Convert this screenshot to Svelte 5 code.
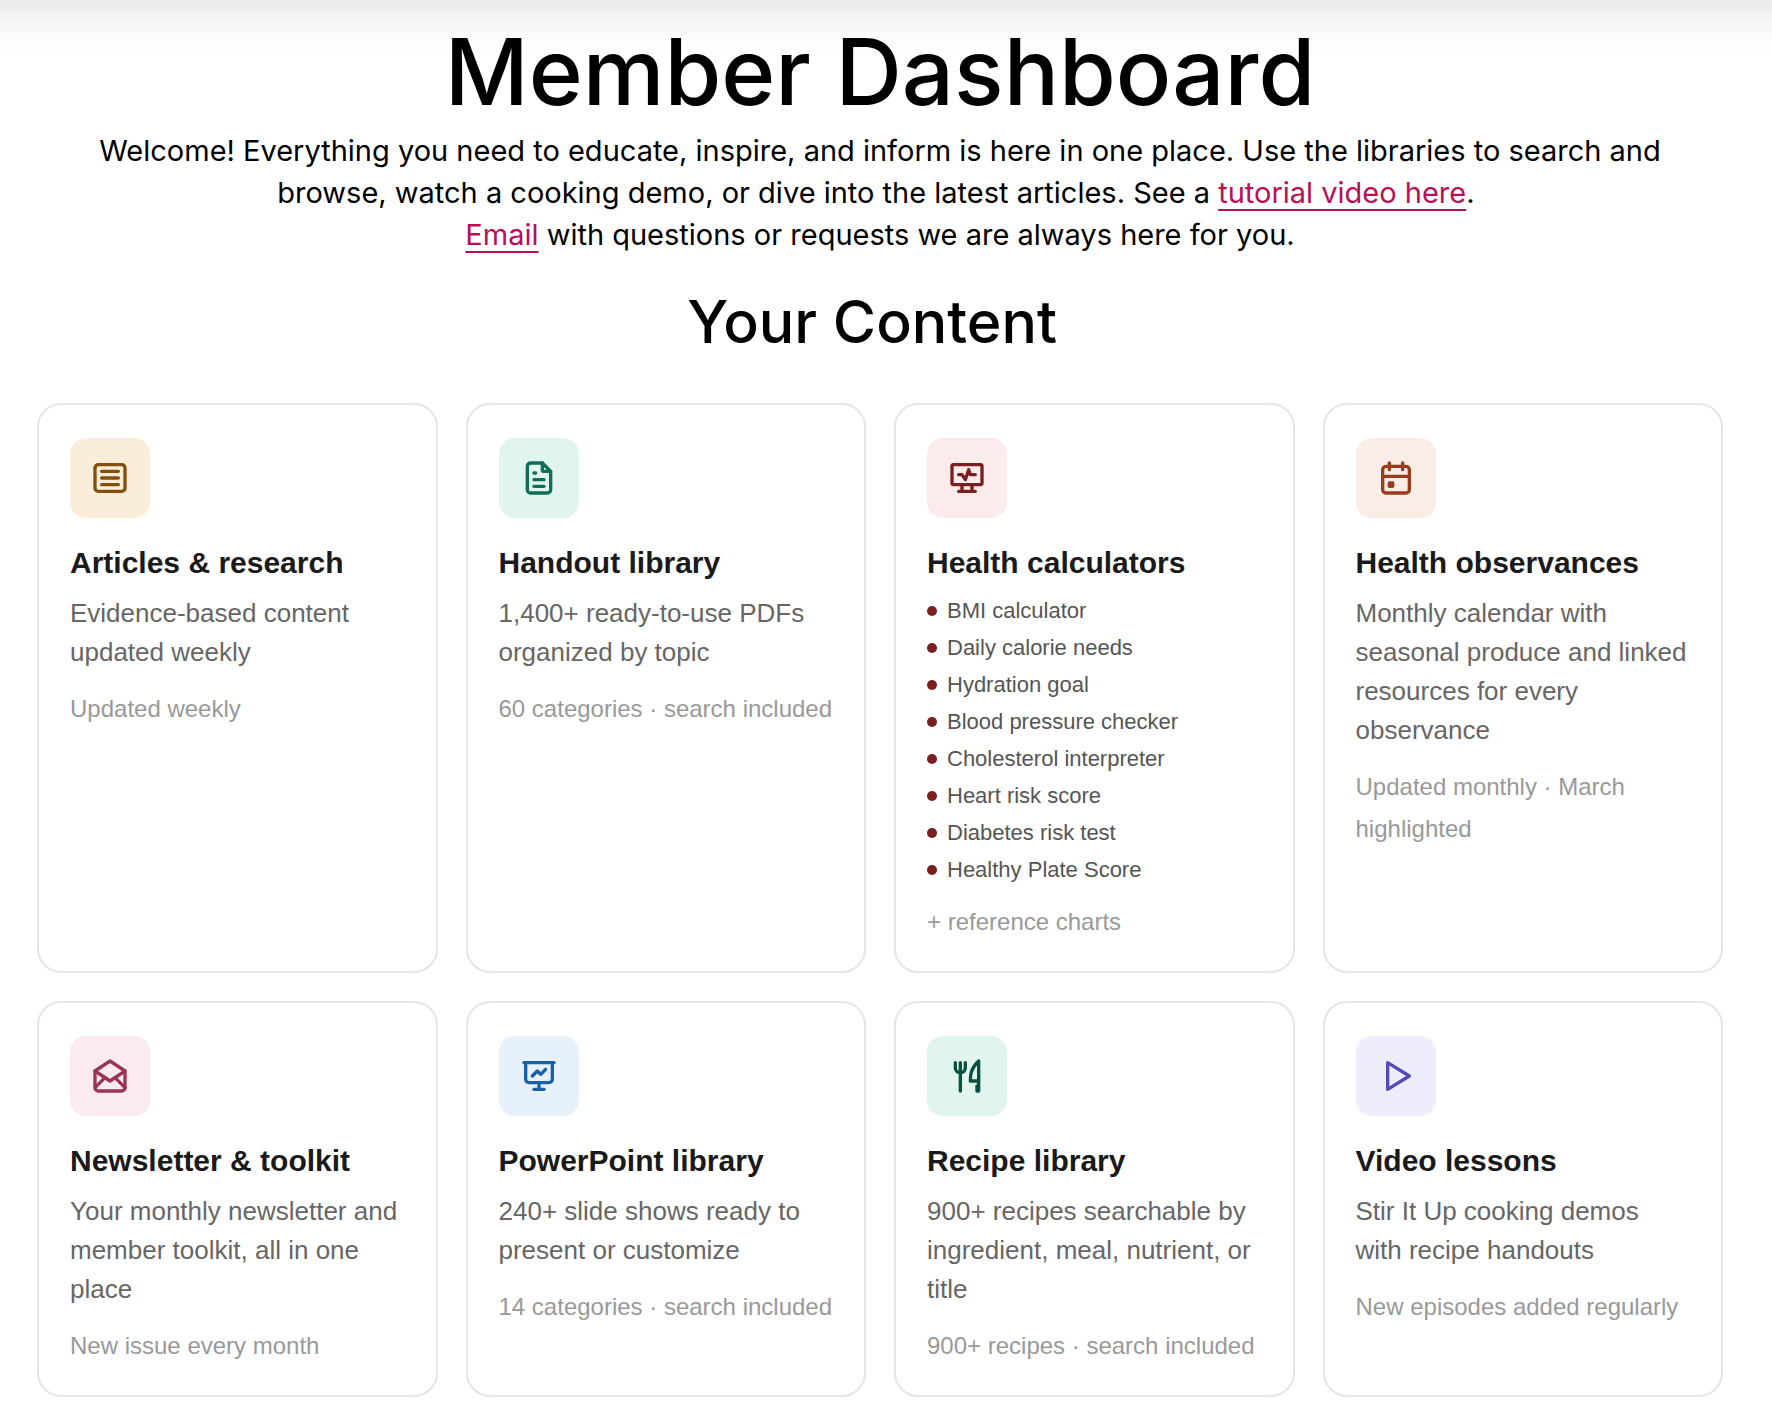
<script>
  const cards = [
    {
      title: "Articles & research",
      tone: "amber",
      desc: "Evidence-based content updated weekly",
      meta: "Updated weekly",
      paths: [
        "M3 6a2 2 0 0 1 2 -2h14a2 2 0 0 1 2 2v12a2 2 0 0 1 -2 2h-14a2 2 0 0 1 -2 -2z",
        "M7 8h10",
        "M7 12h10",
        "M7 16h10",
      ],
    },
    {
      title: "Handout library",
      tone: "teal",
      desc: "1,400+ ready-to-use PDFs organized by topic",
      meta: "60 categories · search included",
      paths: [
        "M14 3v4a1 1 0 0 0 1 1h4",
        "M17 21h-10a2 2 0 0 1 -2 -2v-14a2 2 0 0 1 2 -2h7l5 5v11a2 2 0 0 1 -2 2z",
        "M9 9h1",
        "M9 13h6",
        "M9 17h6",
      ],
    },
    {
      title: "Health calculators",
      tone: "red",
      items: [
        "BMI calculator",
        "Daily calorie needs",
        "Hydration goal",
        "Blood pressure checker",
        "Cholesterol interpreter",
        "Heart risk score",
        "Diabetes risk test",
        "Healthy Plate Score",
      ],
      meta: "+ reference charts",
      paths: [
        "M3 5a1 1 0 0 1 1 -1h16a1 1 0 0 1 1 1v10a1 1 0 0 1 -1 1h-16a1 1 0 0 1 -1 -1z",
        "M7 20h10",
        "M9 16v4",
        "M15 16v4",
        "M7 10h2l2 3l2 -6l1 3h3",
      ],
    },
    {
      title: "Health observances",
      tone: "rust",
      desc: "Monthly calendar with seasonal produce and linked resources for every observance",
      meta: "Updated monthly · March highlighted",
      paths: [
        "M4 7a2 2 0 0 1 2 -2h12a2 2 0 0 1 2 2v12a2 2 0 0 1 -2 2h-12a2 2 0 0 1 -2 -2z",
        "M16 3v4",
        "M8 3v4",
        "M4 11h16",
        "M8 15h2v2h-2z",
      ],
    },
    {
      title: "Newsletter & toolkit",
      tone: "pink",
      desc: "Your monthly newsletter and member toolkit, all in one place",
      meta: "New issue every month",
      paths: [
        "M3 9l9 6l9 -6l-9 -6l-9 6",
        "M21 9v10a2 2 0 0 1 -2 2h-14a2 2 0 0 1 -2 -2v-10",
        "M3 19l6 -6",
        "M15 13l6 6",
      ],
    },
    {
      title: "PowerPoint library",
      tone: "blue",
      desc: "240+ slide shows ready to present or customize",
      meta: "14 categories · search included",
      paths: [
        "M3 4h18",
        "M4 4v10a2 2 0 0 0 2 2h12a2 2 0 0 0 2 -2v-10",
        "M12 16v4",
        "M9 20h6",
        "M8 12l3 -3l2 2l3 -3",
      ],
    },
    {
      title: "Recipe library",
      tone: "green",
      desc: "900+ recipes searchable by ingredient, meal, nutrient, or title",
      meta: "900+ recipes · search included",
      paths: [
        "M19 3v12h-5c-.023 -3.681 .184 -7.406 5 -12zm0 12v6h-1v-3m-10 -14v17m-3 -17v3a3 3 0 1 0 6 0v-3",
      ],
    },
    {
      title: "Video lessons",
      tone: "violet",
      desc: "Stir It Up cooking demos with recipe handouts",
      meta: "New episodes added regularly",
      paths: ["M7 4v16l13 -8z"],
    },
  ];
</script>

<main>
  <header class="intro">
    <h1>Member Dashboard</h1>
    <p>
      Welcome! Everything you need to educate, inspire, and inform is here in one
      place. Use the libraries to search and browse, watch a cooking demo, or dive
      into the latest articles. See a <a href="#tutorial">tutorial video here</a
      >.&nbsp;<br />
      <a href="#email">Email</a> with questions or requests we are always here for
      you.
    </p>
  </header>

  <h2>Your Content&nbsp;</h2>

  <section class="grid">
    {#each cards as card}
      <a class="card" href="#library">
        <span class="icon {card.tone}">
          <svg viewBox="0 0 24 24" aria-hidden="true">
            {#each card.paths as d}
              <path {d} />
            {/each}
          </svg>
        </span>
        <h3>{card.title}</h3>
        {#if card.items}
          <ul>
            {#each card.items as item}
              <li>{item}</li>
            {/each}
          </ul>
        {:else}
          <p class="desc">{card.desc}</p>
        {/if}
        <p class="meta">{card.meta}</p>
      </a>
    {/each}
  </section>
</main>

<style>
  :global(body) {
    margin: 0;
    background: #fff;
  }
  main {
    padding: 24px 49px 28px 37px;
    background: linear-gradient(
      #ebebeb 0,
      #f0f0f0 12px,
      #f8f8f8 28px,
      #fdfdfd 44px,
      #fff 64px
    );
    color: #000;
    font-family: Inter, sans-serif;
  }
  h1,
  h2,
  h3,
  p,
  ul {
    margin: 0;
    padding: 0;
  }
  .intro {
    text-align: center;
  }
  h1 {
    font-size: 92px;
    line-height: 96px;
    font-weight: 500;
  }
  .intro p {
    margin-top: 10px;
    padding: 0 40px;
    font-size: 29px;
    line-height: 42px;
  }
  .intro a {
    color: #b80f56;
    text-decoration: underline;
    text-decoration-thickness: 2px;
    text-underline-offset: 6px;
    text-decoration-skip-ink: none;
  }
  h2 {
    margin-top: 30px;
    text-align: center;
    font-size: 59px;
    line-height: 72px;
    font-weight: 500;
  }
  .grid {
    display: grid;
    grid-template-columns: repeat(4, minmax(0, 1fr));
    gap: 28px;
    margin-top: 45px;
    font-family: "Liberation Sans", Arial, sans-serif;
  }
  .card {
    display: block;
    padding: 33px 31px 28px;
    background: #fff;
    border: 2px solid #e5e5e5;
    border-radius: 24px;
    color: inherit;
    text-decoration: none;
  }
  .icon {
    display: flex;
    align-items: center;
    justify-content: center;
    width: 80px;
    height: 80px;
    border-radius: 16px;
  }
  .icon svg {
    width: 40px;
    height: 40px;
    fill: none;
    stroke: currentColor;
    stroke-width: 2;
    stroke-linecap: round;
    stroke-linejoin: round;
  }
  h3 {
    margin-top: 28px;
    color: #1a1a1a;
    font-size: 30px;
    line-height: 34px;
    font-weight: 700;
  }
  .desc {
    margin-top: 14px;
    color: #666;
    font-size: 26px;
    line-height: 39px;
  }
  .meta {
    margin-top: 16px;
    color: #999;
    font-size: 24px;
    line-height: 42px;
  }
  ul {
    display: grid;
    gap: 6px;
    margin-top: 15px;
    list-style: none;
  }
  li {
    display: flex;
    align-items: center;
    gap: 10px;
    color: #555;
    font-size: 22px;
    line-height: 31px;
  }
  li::before {
    content: "";
    width: 10px;
    height: 10px;
    border-radius: 50%;
    background: #791f1f;
  }
  .amber {
    background: #faeeda;
    color: #854f0b;
  }
  .teal {
    background: #e1f5ee;
    color: #0f6e56;
  }
  .red {
    background: #fcebeb;
    color: #791f1f;
  }
  .rust {
    background: #faece7;
    color: #993c1d;
  }
  .pink {
    background: #fbeaf0;
    color: #993556;
  }
  .blue {
    background: #e6f1fb;
    color: #185fa5;
  }
  .green {
    background: #e1f5ee;
    color: #085041;
  }
  .violet {
    background: #eeedfe;
    color: #534ab7;
  }
</style>
